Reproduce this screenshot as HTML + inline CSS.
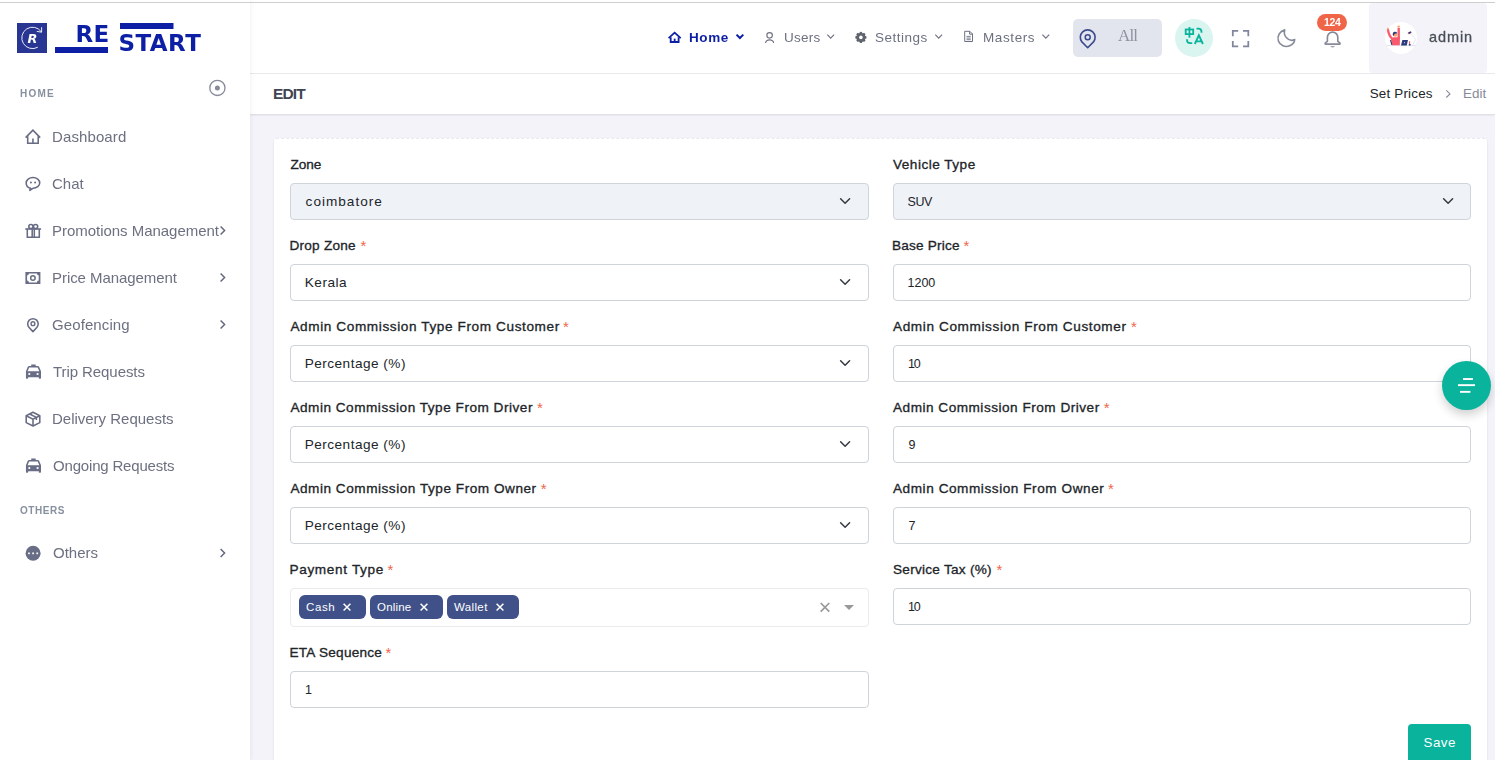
<!DOCTYPE html>
<html lang="en">
<head>
<meta charset="utf-8">
<title>Edit - Set Prices</title>
<style>
*{box-sizing:border-box;margin:0;padding:0}
html,body{width:1495px;height:760px;overflow:hidden}
body{background:#f3f3f9;font-family:"Liberation Sans",sans-serif;color:#212529;position:relative}
.abs{position:absolute}
.tx{white-space:nowrap;line-height:20px}
.sidebar{left:0;top:0;width:250px;height:760px;background:#fff;box-shadow:1px 0 4px rgba(56,65,74,.07)}
.topbar{left:250px;top:0;width:1245px;height:74px;background:#fff;border-bottom:1px solid #e9ebec}
.topline{left:0;top:2px;width:1495px;height:1px;background:#cdcfce}
.titlebar{left:250px;top:74px;width:1245px;height:40px;background:#fff;box-shadow:0 1px 2px rgba(56,65,74,.15)}
.card{left:274px;top:138px;width:1213px;height:640px;background:#fff;border-radius:4px;box-shadow:0 1px 2px rgba(56,65,74,.15)}
.carddash{left:276px;top:138px;width:1209px;height:0;border-top:1px dashed #e9eaf1}
.sb,.st,.nav,.all,.adm,.bdg{will-change:transform}
.sb{font-size:15px;color:#6d7080}
.st{font-size:10px;font-weight:700;color:#87909f}
.nav{font-size:13.5px;color:#6d7080}
.nav.act{color:#0c1fa5;font-weight:700}
.all{font-family:"Liberation Serif",serif;font-size:17px;color:#8f929f}
.adm{font-size:14.5px;color:#495057;-webkit-text-stroke:.3px #495057}
.bdg{font-size:10.5px;color:#fff;font-weight:700}
.ttl{font-size:15.5px;font-weight:700;color:#3f4554}
.crumb{font-size:13.4px;color:#212529}
.crumb.c2{color:#878a99}
.lbl{font-size:13.6px;color:#212529;-webkit-text-stroke:.32px #212529}
.star{font-size:15px;color:#f06548}
.val{font-size:13.6px;color:#212529}
.tagt{font-size:11.5px;color:#fff}
.sv{font-size:13.4px;color:#fff}
.inp{height:37px;width:579px;border:1px solid #ced4da;border-radius:4px;background:#fff}
.inp.dis{background:#eff2f7}
.inp.r{left:893px;width:578px}
.inp.l{left:290px}
.tag{top:595px;height:24px;background:#405189;border-radius:6px}
.save{left:1408px;top:724px;width:63px;height:40px;background:#0ab39c;border-radius:4px}
.fab{left:1442px;top:360.5px;width:49px;height:49px;border-radius:50%;background:#0ab39c;box-shadow:0 5px 10px rgba(30,32,37,.2)}
</style>
</head>
<body>
<div class="abs topbar"></div>
<div class="abs titlebar"></div>
<div class="abs sidebar"></div>
<div class="abs topline"></div>

<div class="abs" style="left:1073px;top:19px;width:89px;height:38px;border-radius:5px;background:#e2e5ed"></div>
<div class="abs" style="left:1175px;top:19px;width:38px;height:38px;border-radius:50%;background:#daf4f0"></div>
<div class="abs" style="left:1369px;top:3px;width:118px;height:70px;background:#f3f3f9;border-radius:4px"></div>
<div class="abs" style="left:1385px;top:22px;width:32px;height:32px;border-radius:50%;background:#fff"></div>
<div class="abs" style="left:1317.300px;top:13.600px;width:29.600px;height:17px;border-radius:9px;background:#f06548"></div>

<div class="abs card"></div>
<div class="abs carddash"></div>

<div class="abs inp l dis" style="top:183px"></div>
<div class="abs inp r dis" style="top:183px"></div>
<div class="abs inp l" style="top:264px"></div>
<div class="abs inp r" style="top:264px"></div>
<div class="abs inp l" style="top:345px"></div>
<div class="abs inp r" style="top:345px"></div>
<div class="abs inp l" style="top:426px"></div>
<div class="abs inp r" style="top:426px"></div>
<div class="abs inp l" style="top:507px"></div>
<div class="abs inp r" style="top:507px"></div>
<div class="abs inp l" style="top:588px;height:39px;border-color:#e9ebec"></div>
<div class="abs inp r" style="top:588px"></div>
<div class="abs inp l" style="top:671px"></div>
<div class="abs tag" style="left:299px;width:67px"></div>
<div class="abs tag" style="left:370px;width:73px"></div>
<div class="abs tag" style="left:447px;width:72px"></div>
<div class="abs save"></div>
<div class="abs fab"></div>

<svg class="abs" style="left:0;top:0" width="1495" height="760" viewBox="0 0 1495 760" fill="none">
<!-- logo -->
<rect x="17" y="23" width="30" height="30" fill="#283593"/>
<path d="M37.8 47.200 A10.700 10.700 0 1 1 41.300 31.800" stroke="#fff" stroke-width="0.9"/>
<path d="M41.600 27.200 V32.200 L36.800 31.400" stroke="#fff" stroke-width="0.9"/>
<rect x="55" y="47" width="53" height="6" fill="#0c1fa5"/>
<rect x="120" y="23" width="53.500" height="6" fill="#0c1fa5"/>

<!-- sidebar toggle -->
<circle cx="217.400" cy="87.900" r="7.600" stroke="#878a99" stroke-width="1.300"/>
<circle cx="217.400" cy="87.900" r="2.500" fill="#878a99"/>

<g stroke="#676b83" stroke-width="1.550" stroke-linejoin="miter">
<!-- home -->
<path d="M25.600 137.600 L32.900 130.200 L40.200 137.600"/>
<path d="M27.700 136.200 V143.300 H38.200 V136.200"/>
<path d="M32.950 138.500 V143.300"/>
<!-- chat -->
<path d="M30.600 188.300 C27.900 187.600 26.200 185.400 26.200 182.900 C26.200 179.900 29.200 177.500 32.950 177.500 C36.700 177.500 39.700 179.900 39.700 182.900 C39.700 185.900 36.700 188.300 32.950 188.300 L29.800 190.400 Z" stroke-linejoin="round"/>
<!-- gift -->
<path d="M25.300 229 H41.100"/>
<path d="M27.300 229 V237.300 H39.300 V229"/>
<path d="M32.200 229 V237.300 M34.300 229 V237.300"/>
<circle cx="30.900" cy="226.500" r="2.100"/>
<circle cx="35.600" cy="226.500" r="2.100"/>
<!-- pin -->
<path d="M32.950 331.600 L29.100 327.500 A5.250 5.250 0 1 1 36.800 327.500 Z" stroke-linejoin="round"/>
<circle cx="32.950" cy="323.700" r="1.900" stroke-width="1.400"/>
<!-- package -->
<path d="M33 412.300 L39.800 415.700 V422.600 L33 426 L26.200 422.600 V415.700 Z" stroke-linejoin="round"/>
<path d="M26.200 415.700 L33 419.100 L39.800 415.700 M33 419.100 V426 M29.600 414 L36.400 417.400 V420"/>
</g>
<!-- chat dots -->
<circle cx="30.900" cy="182.600" r="1" fill="#696e86"/><circle cx="35.100" cy="182.600" r="1" fill="#696e86"/>
<!-- money -->
<path fill="#696e86" fill-rule="evenodd" d="M25.400 272.100 H40.400 V283.900 H25.400 Z M28.900 273.600 A1.800 1.800 0 0 1 27.100 275.400 V280.600 A1.800 1.800 0 0 1 28.900 282.400 H36.900 A1.800 1.800 0 0 1 38.700 280.600 V275.400 A1.800 1.800 0 0 1 36.900 273.600 Z M32.900 275 A3 3 0 1 0 32.900 281 A3 3 0 1 0 32.900 275 Z M32.900 276.500 A1.500 1.500 0 1 1 32.900 279.500 A1.500 1.500 0 1 1 32.900 276.500 Z"/>
<!-- taxi x2 -->
<g fill="#696e86" fill-rule="evenodd">
<path d="M31.200 364.400 H35.700 V365.900 H37.700 A1.500 1.500 0 0 1 39.100 366.800 L41 371.300 V378.100 A.75 .75 0 0 1 40.250 378.850 H39.500 A.75 .75 0 0 1 38.750 378.100 V377.350 H28.200 V378.100 A.75 .75 0 0 1 27.450 378.850 H26.700 A.75 .75 0 0 1 25.950 378.100 V371.300 L27.800 366.800 A1.500 1.500 0 0 1 29.200 365.900 H31.200 Z M27.600 371.300 H39.300 L37.700 367.500 H29.200 Z M29.300 372.900 A1.100 1.100 0 1 0 29.300 375.100 A1.100 1.100 0 1 0 29.300 372.900 Z M37.600 372.900 A1.100 1.100 0 1 0 37.600 375.100 A1.100 1.100 0 1 0 37.600 372.900 Z"/>
</g>
<g fill="#696e86" fill-rule="evenodd" transform="translate(0 94)">
<path d="M31.200 364.400 H35.700 V365.900 H37.700 A1.500 1.500 0 0 1 39.100 366.800 L41 371.300 V378.100 A.75 .75 0 0 1 40.250 378.850 H39.500 A.75 .75 0 0 1 38.750 378.100 V377.350 H28.200 V378.100 A.75 .75 0 0 1 27.450 378.850 H26.700 A.75 .75 0 0 1 25.950 378.100 V371.300 L27.800 366.800 A1.500 1.500 0 0 1 29.200 365.900 H31.200 Z M27.600 371.300 H39.300 L37.700 367.500 H29.200 Z M29.300 372.900 A1.100 1.100 0 1 0 29.300 375.100 A1.100 1.100 0 1 0 29.300 372.900 Z M37.600 372.900 A1.100 1.100 0 1 0 37.600 375.100 A1.100 1.100 0 1 0 37.600 372.900 Z"/>
</g>
<!-- others -->
<circle cx="33.100" cy="553.300" r="7.500" fill="#696e86"/>
<rect x="28.100" y="552.500" width="1.700" height="1.700" fill="#fff"/><rect x="32.250" y="552.500" width="1.700" height="1.700" fill="#fff"/><rect x="36.400" y="552.500" width="1.700" height="1.700" fill="#fff"/>
<!-- sidebar chevrons -->
<g stroke="#62667c" stroke-width="1.450">
<path d="M220.600 226.600 L224.600 230.600 L220.600 234.600"/>
<path d="M220.600 273.600 L224.600 277.600 L220.600 281.600"/>
<path d="M220.600 320.600 L224.600 324.600 L220.600 328.600"/>
<path d="M220.600 549 L224.600 553 L220.600 557"/>
</g>

<!-- NAV: home (active) -->
<g stroke="#0c1fa5" stroke-width="1.800">
<path d="M668.600 38.200 L674.650 32.700 L680.700 38.200"/>
<path d="M670.700 37.300 V42 H678.600 V37.300"/>
<path d="M674.650 38.600 V42"/>
<path d="M736.500 34.600 L739.900 38 L743.300 34.600" stroke-width="2"/>
</g>
<g stroke="#6d7080" stroke-width="1.150">
<!-- user -->
<circle cx="769.600" cy="35.300" r="2.750"/>
<path d="M765.600 43.100 A4 3.300 0 0 1 773.600 43.100"/>
<!-- chevrons -->
<path d="M827.300 34.700 L830.700 38.100 L834.100 34.700"/>
<path d="M935.300 34.700 L938.700 38.100 L942.100 34.700"/>
<path d="M1042.400 34.700 L1045.800 38.100 L1049.200 34.700"/>
<!-- file -->
<path d="M964.700 31.300 H969.800 L972.500 34 V41.500 H964.700 Z" stroke-width="1"/>
<path d="M969.600 31.300 V34.200 H972.500" stroke-width="1"/>
<path d="M966.500 36.400 H970.700 M966.500 38.100 H970.700 M966.500 39.700 H970.700" stroke-width=".9"/>
</g>
<!-- gear -->
<g transform="translate(860.900 37.400)">
<path fill="#60646f" fill-rule="evenodd" d="M-1.28 -4.47 L-1.07 -5.50 A5.60 5.60 0 0 1 1.07 -5.50 L1.28 -4.47 A4.65 4.65 0 0 1 2.25 -4.07 L3.13 -4.64 A5.60 5.60 0 0 1 4.64 -3.13 L4.07 -2.25 A4.65 4.65 0 0 1 4.47 -1.28 L5.50 -1.07 A5.60 5.60 0 0 1 5.50 1.07 L4.47 1.28 A4.65 4.65 0 0 1 4.07 2.25 L4.64 3.13 A5.60 5.60 0 0 1 3.13 4.64 L2.25 4.07 A4.65 4.65 0 0 1 1.28 4.47 L1.07 5.50 A5.60 5.60 0 0 1 -1.07 5.50 L-1.28 4.47 A4.65 4.65 0 0 1 -2.25 4.07 L-3.13 4.64 A5.60 5.60 0 0 1 -4.64 3.13 L-4.07 2.25 A4.65 4.65 0 0 1 -4.47 1.28 L-5.50 1.07 A5.60 5.60 0 0 1 -5.50 -1.07 L-4.47 -1.28 A4.65 4.65 0 0 1 -4.07 -2.25 L-4.64 -3.13 A5.60 5.60 0 0 1 -3.13 -4.64 L-2.25 -4.07 A4.65 4.65 0 0 1 -1.28 -4.47 Z M0 -1.80 A1.80 1.80 0 1 0 0 1.80 A1.80 1.80 0 1 0 0 -1.80 Z"/>
</g>
<!-- pin in All -->
<path d="M1087.700 47.700 L1081.900 41.900 A7.400 7.400 0 1 1 1093.500 41.900 Z" stroke="#3a4a8c" stroke-width="1.600" stroke-linejoin="round"/>
<circle cx="1087.700" cy="37.200" r="2.500" stroke="#3a4a8c" stroke-width="1.500"/>
<!-- translate -->
<g stroke="#0ab39c" stroke-width="1.800">
<rect x="1185.700" y="29.500" width="7.500" height="4.600"/>
<path d="M1189.450 27 V37.700"/>
<path d="M1196.500 28.600 H1198.300 A3.200 3.200 0 0 1 1201.500 31.800 V32.800"/>
<path d="M1187 39.200 V40 A3.200 3.200 0 0 0 1190.200 43.200 H1192.200"/>
<path d="M1194.800 44 L1198.850 35.300 L1202.900 44 M1196.200 41.300 H1201.500" stroke-width="1.850" stroke-linejoin="miter"/>
</g>
<!-- fullscreen -->
<g stroke="#82869c" stroke-width="1.750">
<path d="M1232.800 36.200 V30.900 H1238.200"/>
<path d="M1243 30.900 H1248.300 V36.200"/>
<path d="M1248.300 41 V46.300 H1243"/>
<path d="M1238.200 46.300 H1232.800 V41"/>
</g>
<!-- moon -->
<path d="M1284.700 29.900 C1279.700 31.200 1276.800 36.300 1278.400 41 C1280 45.600 1285.200 47.700 1289.700 45.800 C1292.600 44.600 1294.500 42.200 1294.700 39.500 C1292.200 40.800 1288.700 40.100 1286.500 37.700 C1284.500 35.500 1283.900 32.400 1284.700 29.900 Z" stroke="#878a99" stroke-width="1.650" stroke-linejoin="round"/>
<!-- bell -->
<path d="M1327.400 41.400 V37.300 A5.200 5.200 0 0 1 1337.800 37.300 V41.400 L1339.800 42.900 Q1340.500 44.100 1339.500 44.100 H1325.700 Q1324.700 44.100 1325.400 42.900 Z" stroke="#878a99" stroke-width="1.650" stroke-linejoin="round"/>
<path d="M1330.200 46.300 H1335 A2.500 1.600 0 0 1 1330.200 46.300 Z" fill="#878a99"/>
<!-- avatar illustration -->
<g>
<path d="M1386.500 45.600 H1415.500" stroke="#d9dbe6" stroke-width=".8"/>
<path d="M1390 40 L1391.300 45 H1393 L1391.300 40 Z" fill="#2b3a7c"/>
<path d="M1388 29.800 Q1388.600 35.400 1392.800 39.300" stroke="#fa5a6e" stroke-width="2.300" stroke-linecap="round" fill="none"/>
<path d="M1398.700 28 V39" stroke="#fa5a6e" stroke-width="2.400" fill="none"/>
<path d="M1391.300 38.300 L1393.900 37.300 H1400 L1399.800 45.200 H1392.500 L1391.100 40.500 Z" fill="#fa5a6e"/>
<circle cx="1398.650" cy="26.600" r="1.200" fill="#f9a470"/>
<circle cx="1387.900" cy="28.800" r="1" fill="#f9a470"/>
<circle cx="1395.100" cy="34.400" r="2.300" fill="#f9a470"/>
<path d="M1392.700 34.600 A2.450 2.450 0 0 1 1397.400 33.300 L1394.700 33.800 L1393.600 36 Z" fill="#2b3a7c"/>
<path d="M1402.400 39.900 H1408 L1406.700 45.500 H1401 Z" fill="#2b3a7c"/>
<circle cx="1404.500" cy="42.700" r=".6" fill="#cfd3ea"/>
<path d="M1410.100 33 L1415.700 39.300 L1412.600 45.300" stroke="#c9ccd8" stroke-width=".5"/>
<path d="M1408 32.600 L1410.800 31.300 L1411.600 32.600 L1409 34.200 Z" fill="#2b3a7c"/>
<circle cx="1408.500" cy="33.500" r=".8" fill="#fa5a6e"/>
<rect x="1409" y="41.300" width="1.100" height="3" fill="#fa5a6e"/>
<rect x="1408.800" y="44" width="1.800" height="1.500" fill="#2b3a7c"/>
</g>
<!-- crumb chevron -->
<path d="M1446.300 90.300 L1450 93.900 L1446.300 97.500" stroke="#878a99" stroke-width="1.100"/>
<!-- select chevrons -->
<g stroke="#343a40" stroke-width="1.500" stroke-linecap="round" stroke-linejoin="round">
<path d="M840.600 198.800 L845.100 203.300 L849.600 198.800"/>
<path d="M1443.600 198.800 L1448.100 203.300 L1452.600 198.800"/>
<path d="M840.600 279.800 L845.100 284.300 L849.600 279.800"/>
<path d="M840.600 360.800 L845.100 365.300 L849.600 360.800"/>
<path d="M840.600 441.800 L845.100 446.300 L849.600 441.800"/>
<path d="M840.600 522.800 L845.100 527.300 L849.600 522.800"/>
</g>
<!-- multiselect clear + caret -->
<path d="M820.700 603 L829.300 611.600 M829.300 603 L820.700 611.600" stroke="#999" stroke-width="1.700"/>
<path d="M844 605 H854 L849 610 Z" fill="#999"/>
<!-- tag x -->
<g stroke="#fff" stroke-width="1.500">
<path d="M343.600 603.700 L350.400 610.500 M350.400 603.700 L343.600 610.500"/>
<path d="M420.600 603.700 L427.400 610.500 M427.400 603.700 L420.600 610.500"/>
<path d="M496.600 603.700 L503.400 610.500 M503.400 603.700 L496.600 610.500"/>
</g>
<!-- fab lines -->
<g fill="#fff">
<rect x="1463" y="378.100" width="10" height="1.900"/>
<rect x="1458" y="384.200" width="17" height="1.900"/>
<rect x="1460" y="390.900" width="10.400" height="1.900"/>
</g>
</svg>

<svg class="abs" style="left:0;top:0;will-change:transform" width="250" height="60" viewBox="0 0 250 60">
<text x="27.600" y="42.700" font-family="DejaVu Sans, Liberation Sans, sans-serif" font-weight="700" font-style="italic" font-size="12.800" fill="#fff">R</text>
<text x="75.500" y="41.900" font-family="DejaVu Sans, sans-serif" font-weight="700" font-size="23" fill="#0c1fa5" letter-spacing="0.4">RE</text>
<text x="118.400" y="51" font-family="DejaVu Sans, sans-serif" font-weight="700" font-size="23" fill="#0c1fa5" letter-spacing="0.45">START</text>
</svg>


<div id="sb1" class="abs tx sb" style="left:51.90px;top:126.80px;letter-spacing:0.105px">Dashboard</div>
<div id="sb2" class="abs tx sb" style="left:51.90px;top:173.80px;letter-spacing:-0.000px">Chat</div>
<div id="sb3" class="abs tx sb" style="left:51.72px;top:220.80px;letter-spacing:-0.030px">Promotions Management</div>
<div id="sb4" class="abs tx sb" style="left:51.90px;top:267.80px;letter-spacing:-0.060px">Price Management</div>
<div id="sb5" class="abs tx sb" style="left:51.90px;top:314.80px;letter-spacing:0.100px">Geofencing</div>
<div id="sb6" class="abs tx sb" style="left:52.80px;top:361.80px;letter-spacing:-0.075px">Trip Requests</div>
<div id="sb7" class="abs tx sb" style="left:51.90px;top:408.80px;letter-spacing:-0.010px">Delivery Requests</div>
<div id="sb8" class="abs tx sb" style="left:52.80px;top:455.80px;letter-spacing:-0.180px">Ongoing Requests</div>
<div id="sb9" class="abs tx sb" style="left:52.80px;top:542.80px;letter-spacing:0.000px">Others</div>
<div id="st1" class="abs tx st" style="left:20.40px;top:83.53px;letter-spacing:1.200px">HOME</div>
<div id="st2" class="abs tx st" style="left:20.40px;top:500.54px;letter-spacing:0.540px">OTHERS</div>
<div id="n1" class="abs tx nav act" style="left:688.50px;top:28.32px;letter-spacing:0.600px">Home</div>
<div id="n2" class="abs tx nav" style="left:783.50px;top:28.32px;letter-spacing:0.225px">Users</div>
<div id="n3" class="abs tx nav" style="left:874.70px;top:28.32px;letter-spacing:0.510px">Settings</div>
<div id="n4" class="abs tx nav" style="left:982.70px;top:28.32px;letter-spacing:0.600px">Masters</div>
<div id="all" class="abs tx all" style="left:1118.40px;top:26.26px;letter-spacing:-0.900px">All</div>
<div id="adm" class="abs tx adm" style="left:1428.60px;top:26.98px;letter-spacing:0.900px">admin</div>
<div id="bdg" class="abs tx bdg" style="left:1323.60px;top:12.36px;letter-spacing:-0.400px">124</div>
<div id="ttl" class="abs tx ttl" style="left:273.10px;top:84.13px;letter-spacing:-0.900px">EDIT</div>
<div id="c1" class="abs tx crumb" style="left:1369.70px;top:83.86px;letter-spacing:0.200px">Set Prices</div>
<div id="c2" class="abs tx crumb c2" style="left:1463.10px;top:83.86px;letter-spacing:-0.000px">Edit</div>
<div id="l1" class="abs tx lbl" style="left:290.40px;top:155.09px;letter-spacing:0.000px">Zone</div>
<div id="l2" class="abs tx lbl" style="left:893.00px;top:155.09px;letter-spacing:0.487px">Vehicle Type</div>
<div id="l3" class="abs tx lbl" style="left:289.50px;top:236.09px;letter-spacing:0.230px">Drop Zone</div>
<div id="l4" class="abs tx lbl" style="left:892.10px;top:236.09px;letter-spacing:0.200px">Base Price</div>
<div id="l5" class="abs tx lbl" style="left:290.40px;top:317.09px;letter-spacing:0.605px">Admin Commission Type From Customer</div>
<div id="l6" class="abs tx lbl" style="left:893.00px;top:317.09px;letter-spacing:0.611px">Admin Commission From Customer</div>
<div id="l7" class="abs tx lbl" style="left:290.40px;top:398.09px;letter-spacing:0.514px">Admin Commission Type From Driver</div>
<div id="l8" class="abs tx lbl" style="left:893.00px;top:398.09px;letter-spacing:0.503px">Admin Commission From Driver</div>
<div id="l9" class="abs tx lbl" style="left:290.40px;top:479.09px;letter-spacing:0.527px">Admin Commission Type From Owner</div>
<div id="l10" class="abs tx lbl" style="left:893.00px;top:479.09px;letter-spacing:0.553px">Admin Commission From Owner</div>
<div id="l11" class="abs tx lbl" style="left:289.50px;top:560.09px;letter-spacing:0.650px">Payment Type</div>
<div id="l12" class="abs tx lbl" style="left:893.00px;top:560.09px;letter-spacing:0.258px">Service Tax (%)</div>
<div id="l13" class="abs tx lbl" style="left:289.50px;top:643.09px;letter-spacing:0.249px">ETA Sequence</div>
<div id="v1" class="abs tx val" style="left:305.60px;top:192.29px;letter-spacing:1.000px">coimbatore</div>
<div id="v2" class="abs tx val" style="left:907.50px;top:191.97px;font-size:12.5px;letter-spacing:-0.450px">SUV</div>
<div id="v3" class="abs tx val" style="left:304.70px;top:273.29px;letter-spacing:0.540px">Kerala</div>
<div id="v4" class="abs tx val" style="left:907.50px;top:272.97px;font-size:12.5px;letter-spacing:0.000px">1200</div>
<div id="v5" class="abs tx val" style="left:304.70px;top:354.29px;letter-spacing:0.485px">Percentage (%)</div>
<div id="v6" class="abs tx val" style="left:908.04px;top:353.97px;font-size:12.5px;letter-spacing:-1.300px">10</div>
<div id="v7" class="abs tx val" style="left:304.70px;top:435.29px;letter-spacing:0.485px">Percentage (%)</div>
<div id="v8" class="abs tx val" style="left:908.60px;top:434.97px;font-size:12.5px;letter-spacing:0.000px">9</div>
<div id="v9" class="abs tx val" style="left:304.70px;top:516.29px;letter-spacing:0.485px">Percentage (%)</div>
<div id="v10" class="abs tx val" style="left:908.60px;top:515.97px;font-size:12.5px;letter-spacing:0.000px">7</div>
<div id="v12" class="abs tx val" style="left:908.04px;top:596.97px;font-size:12.5px;letter-spacing:-1.300px">10</div>
<div id="v13" class="abs tx val" style="left:305.10px;top:679.97px;font-size:12.5px;letter-spacing:0.000px">1</div>
<div id="t1" class="abs tx tagt" style="left:306.00px;top:597.02px;letter-spacing:0.600px">Cash</div>
<div id="t2" class="abs tx tagt" style="left:377.00px;top:597.02px;letter-spacing:0.180px">Online</div>
<div id="t3" class="abs tx tagt" style="left:454.00px;top:597.02px;letter-spacing:0.360px">Wallet</div>
<div id="sv" class="abs tx sv" style="left:1423.50px;top:733.36px;letter-spacing:0.450px">Save</div>
<div class="abs tx star" style="left:360.40px;top:235.69px">*</div>
<div class="abs tx star" style="left:963.40px;top:235.69px">*</div>
<div class="abs tx star" style="left:563.00px;top:316.69px">*</div>
<div class="abs tx star" style="left:1131.00px;top:316.69px">*</div>
<div class="abs tx star" style="left:537.00px;top:397.69px">*</div>
<div class="abs tx star" style="left:1103.80px;top:397.69px">*</div>
<div class="abs tx star" style="left:540.80px;top:478.69px">*</div>
<div class="abs tx star" style="left:1108.00px;top:478.69px">*</div>
<div class="abs tx star" style="left:387.40px;top:559.69px">*</div>
<div class="abs tx star" style="left:996.40px;top:559.69px">*</div>
<div class="abs tx star" style="left:385.40px;top:642.69px">*</div>
</body>
</html>
